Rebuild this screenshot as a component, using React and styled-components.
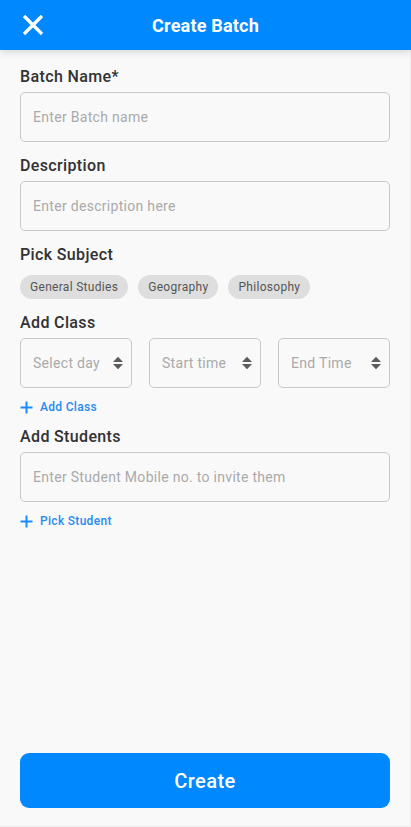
import styled, { createGlobalStyle } from "styled-components";

const GlobalStyle = createGlobalStyle`
  html, body {
    margin: 0;
    padding: 0;
    background: #f9f9f9;
    font-family: Roboto, "Liberation Sans", sans-serif;
  }
  * { box-sizing: border-box; }
`;

const subjects = ["General Studies", "Geography", "Philosophy"];

const PlusIcon = () => (
  <svg width="13" height="13" viewBox="0 0 13 13">
    <path d="M6.5 0.5v12M0.5 6.5h12" stroke="#1a8cff" strokeWidth="2" />
  </svg>
);

const SortIcon = () => (
  <svg width="12" height="14" viewBox="0 0 12 14">
    <path d="M6 0.8L11 6H1z M6 13.2L1 8h10z" fill="#5c5c5c" />
  </svg>
);

const App = () => {
  return (
    <>
      <GlobalStyle />
      <Page>
        <Header>
          <CloseBtn>
            <svg width="22" height="22" viewBox="0 0 22 22">
              <path d="M2 2L20 20M20 2L2 20" stroke="#fff" strokeWidth="3.2" />
            </svg>
          </CloseBtn>
          <Title>Create Batch</Title>
        </Header>

        <Form>
          <Field>
            <Label>Batch Name*</Label>
            <Input placeholder="Enter Batch name" />
          </Field>
          <Field>
            <Label>Description</Label>
            <Input placeholder="Enter description here" />
          </Field>
          <Field>
            <Label>Pick Subject</Label>
            <Chips>
              {subjects.map((s) => (
                <Chip key={s}>{s}</Chip>
              ))}
            </Chips>
          </Field>
          <Field>
            <Label>Add Class</Label>
            <SelectRow>
              <Select>
                <span>Select day</span>
                <SortIcon />
              </Select>
              <Select>
                <span>Start time</span>
                <SortIcon />
              </Select>
              <Select>
                <span>End Time</span>
                <SortIcon />
              </Select>
            </SelectRow>
            <AddLink>
              <PlusIcon />
              Add Class
            </AddLink>
          </Field>
          <Field>
            <Label>Add Students</Label>
            <Input placeholder="Enter Student Mobile no. to invite them" />
            <AddLink>
              <PlusIcon />
              Pick Student
            </AddLink>
          </Field>
        </Form>

        <Footer>
          <CreateBtn>Create</CreateBtn>
        </Footer>
      </Page>
    </>
  );
};

export default App;

const medium = `"Roboto Medium", Roboto, "Liberation Sans", sans-serif`;

const Page = styled.div`
  width: 411px;
  height: 827px;
  display: flex;
  flex-direction: column;
  background: #f9f9f9;
  border-right: 1px solid #ececec;
  border-bottom: 1px solid #ececec;
`;

const Header = styled.div`
  height: 50px;
  flex-shrink: 0;
  background: #0088ff;
  display: flex;
  align-items: center;
  justify-content: center;
  position: relative;
  box-shadow: 0 2px 8px rgba(0, 0, 0, 0.15);
  margin-right: -1px;
`;

const CloseBtn = styled.div`
  position: absolute;
  left: 22px;
  top: 14px;
  width: 22px;
  height: 22px;
  display: flex;
`;

const Title = styled.div`
  color: #fff;
  font-size: 18px;
  font-weight: 700;
  letter-spacing: 0.2px;
`;

const Form = styled.div`
  flex: 1;
  padding: 15px 20px 0 20px;
  display: flex;
  flex-direction: column;
  gap: 12px;
`;

const Field = styled.div`
  display: flex;
  flex-direction: column;
`;

const Label = styled.div`
  font-family: ${medium};
  font-size: 16px;
  font-weight: 500;
  color: #333;
  line-height: 24px;
  margin-bottom: 3px;
  letter-spacing: 0.35px;
`;

const Input = styled.input`
  width: 100%;
  height: 50px;
  border: 1px solid #c8c8c8;
  border-radius: 5px;
  background: transparent;
  padding: 0 12px;
  font-family: Roboto, "Liberation Sans", sans-serif;
  font-size: 14px;
  letter-spacing: 0.3px;
  color: #333;
  outline: none;
  &::placeholder {
    color: #aaa;
  }
`;

const Chips = styled.div`
  display: flex;
  gap: 10px;
  margin-top: 5px;
`;

const Chip = styled.div`
  height: 24px;
  padding: 0 10px;
  border-radius: 12px;
  background: #dedede;
  color: #555;
  font-size: 12px;
  letter-spacing: 0.3px;
  display: flex;
  align-items: center;
`;

const SelectRow = styled.div`
  display: grid;
  grid-template-columns: repeat(3, 1fr);
  gap: 17px;
`;

const Select = styled.div`
  height: 50px;
  border: 1px solid #c8c8c8;
  border-radius: 5px;
  padding: 0 7px 0 12px;
  display: flex;
  align-items: center;
  justify-content: space-between;
  font-size: 14px;
  letter-spacing: 0.3px;
  color: #aaa;
`;

const AddLink = styled.div`
  display: flex;
  align-items: center;
  gap: 7px;
  height: 14px;
  margin-top: 12px;
  margin-bottom: -1px;
  color: #2a8cf0;
  font-family: ${medium};
  font-size: 12px;
  font-weight: 500;
  letter-spacing: 0.3px;
`;

const Footer = styled.div`
  padding: 0 20px 18px 20px;
`;

const CreateBtn = styled.button`
  width: 100%;
  height: 55px;
  border: none;
  border-radius: 9px;
  background: #0088ff;
  color: #fff;
  font-family: ${medium};
  font-size: 20px;
  font-weight: 500;
  letter-spacing: 0.4px;
`;
